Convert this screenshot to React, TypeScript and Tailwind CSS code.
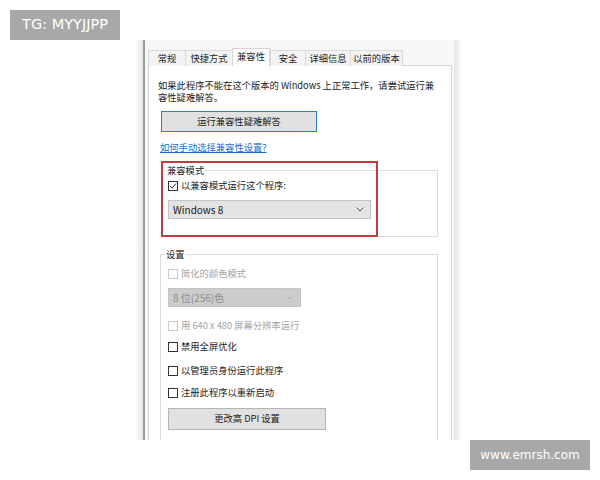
import React from 'react'

const tabs = [
  { label: '常规', w: 'w-[37px]' },
  { label: '快捷方式', w: 'w-[47px]' },
  { label: '兼容性', w: 'w-[38px]', active: true },
  { label: '安全', w: 'w-[35px]' },
  { label: '详细信息', w: 'w-[45px]' },
  { label: '以前的版本', w: 'w-[53px]' },
]

const Chevron = ({ color }: { color: string }) => (
  <svg width="8" height="5" viewBox="0 0 8 5" fill="none">
    <path d="M0.5 0.5 L4 4 L7.5 0.5" stroke={color} strokeWidth="1" />
  </svg>
)

const Checkbox = ({
  label,
  checked,
  disabled,
}: {
  label: string
  checked?: boolean
  disabled?: boolean
}) => (
  <div className={`flex items-center gap-[3px] h-[12px] ${disabled ? 'text-[#a3a3a3]' : 'text-[#222]'}`}>
    <span
      className={`w-[10px] h-[10px] border flex items-center justify-center bg-white ${
        disabled ? 'border-[#c8c8c8]' : 'border-[#333]'
      }`}
    >
      {checked && (
        <svg width="8" height="8" viewBox="0 0 8 8" fill="none">
          <path d="M1 4.2 L3 6.2 L7 1.5" stroke="#222" strokeWidth="1" />
        </svg>
      )}
    </span>
    <span>{label}</span>
  </div>
)

const GroupBox = ({
  title,
  className,
  children,
}: {
  title: string
  className?: string
  children: React.ReactNode
}) => (
  <div className={`relative border border-[#dcdcdc] ${className ?? ''}`}>
    <span className="absolute -top-[7px] left-[4px] bg-white px-[1px] leading-[12px] text-[#222]">
      {title}
    </span>
    {children}
  </div>
)

export default function App() {
  return (
    <div
      className="relative w-[600px] h-[480px] bg-white overflow-hidden"
      style={{ fontFamily: '"Noto Sans CJK SC", "Noto Sans", sans-serif' }}
    >
      <div className="pt-[40px] pl-[135px]">
        <div className="flex w-[327px] h-[400px] overflow-hidden">
          <div className="w-[8px] bg-gradient-to-r from-white to-[#e4e4e4]" />
          <div className="w-[2px] bg-[#9c9c9c]" />
          <div className="w-[309px] bg-[#f7f7f7] flex flex-col pl-[3px] pt-[8px] text-[9.3px]">
            <div className="flex items-end h-[18px] -mb-[1px] relative z-10">
              {tabs.map((t) =>
                t.active ? (
                  <div
                    key={t.label}
                    className={`${t.w} h-[18px] bg-white border border-b-0 border-[#d4d4d4] flex items-center justify-center text-[#1f1f1f] pb-[1px]`}
                  >
                    {t.label}
                  </div>
                ) : (
                  <div
                    key={t.label}
                    className={`${t.w} h-[16px] bg-[#f3f3f3] border border-b-0 border-r-0 last:border-r border-[#dadada] flex items-center justify-center text-[#262626]`}
                  >
                    {t.label}
                  </div>
                ),
              )}
            </div>
            <div className="w-[304px] flex-1 bg-white border border-[#d4d4d4] pl-[9px] pr-[13px] pt-[13px] text-[#222]">
              <p className="leading-[12px]">
                如果此程序不能在这个版本的 Windows 上正常工作，请尝试运行兼容性疑难解答。
              </p>
              <button
                type="button"
                className="mt-[8px] ml-[3px] w-[156px] h-[21px] bg-[#e1e1e1] border border-[#2a7fd4] text-[#222] flex items-center justify-center"
              >
                运行兼容性疑难解答
              </button>
              <p className="mt-[9px] ml-[2px] leading-[12px] text-[#1a6fd0] underline">
                如何手动选择兼容性设置?
              </p>

              <GroupBox title="兼容模式" className="mt-[17px] ml-[3px] w-[277px] h-[67px] pt-[9px] pl-[6px]">
                <Checkbox label="以兼容模式运行这个程序:" checked />
                <div className="mt-[8px] w-[203px] h-[19px] bg-[#e3e3e3] border border-[#c4c4c4] flex items-center justify-between pl-[4px] pr-[6px] text-[10px] text-[#222]">
                  <span>Windows 8</span>
                  <Chevron color="#555" />
                </div>
                <div className="absolute -left-[1px] -top-[10px] w-[217px] h-[76px] border-2 border-[#c23b3f] pointer-events-none" />
              </GroupBox>

              <GroupBox title="设置" className="mt-[17px] ml-[2px] w-[278px] h-[200px] pt-[13px] pl-[7px]">
                <Checkbox label="简化的颜色模式" disabled />
                <div className="mt-[8px] w-[133px] h-[19px] bg-[#cccccc] border border-[#c4c4c4] flex items-center justify-between pl-[4px] pr-[6px] text-[10px] text-[#8c8c8c]">
                  <span>8 位(256)色</span>
                  <Chevron color="#b0b0b0" />
                </div>
                <div className="mt-[13px]">
                  <Checkbox label="用 640 x 480 屏幕分辨率运行" disabled />
                </div>
                <div className="mt-[9px]">
                  <Checkbox label="禁用全屏优化" />
                </div>
                <div className="mt-[12px]">
                  <Checkbox label="以管理员身份运行此程序" />
                </div>
                <div className="mt-[10px]">
                  <Checkbox label="注册此程序以重新启动" />
                </div>
                <button
                  type="button"
                  className="mt-[9px] w-[158px] h-[22px] bg-[#e1e1e1] border border-[#b4b4b4] text-[#222] flex items-center justify-center"
                >
                  更改高 DPI 设置
                </button>
              </GroupBox>
            </div>
          </div>
          <div className="w-[8px] bg-gradient-to-r from-[#e4e4e4] to-white" />
        </div>
      </div>

      <div
        className="absolute left-[10px] top-[10px] w-[110px] h-[30px] bg-[#a8a8a8] text-white text-[14.5px] flex items-center justify-center"
        style={{ fontFamily: '"DejaVu Sans", sans-serif' }}
      >
        TG: MYYJJPP
      </div>
      <div
        className="absolute left-[470px] top-[440px] w-[120px] h-[30px] bg-[#a8a8a8] text-white text-[12px] flex items-center justify-center"
        style={{ fontFamily: '"DejaVu Sans", sans-serif' }}
      >
        www.emrsh.com
      </div>
    </div>
  )
}
